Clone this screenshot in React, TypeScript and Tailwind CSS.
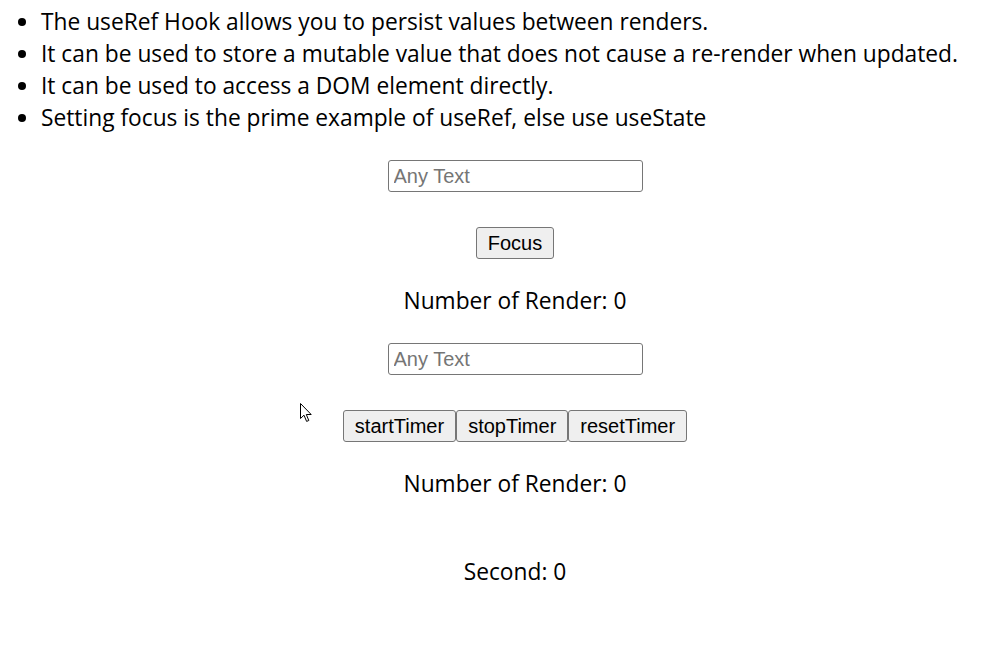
import { useRef, useState } from 'react';

const points = [
  'The useRef Hook allows you to persist values between renders.',
  'It can be used to store a mutable value that does not cause a re-render when updated.',
  'It can be used to access a DOM element directly.',
  'Setting focus is the prime example of useRef, else use useState',
];

const btn =
  "h-[32px] px-[11px] bg-[#efefef] border border-[#767676] rounded-[3px] text-[20px] text-black font-['Liberation_Sans',Arial,sans-serif] leading-none";
const field =
  "h-[32px] w-[255px] px-[5px] border border-[#767676] rounded-[3px] text-[20px] font-['Liberation_Sans',Arial,sans-serif] placeholder:text-[#757575] outline-none";

// mouse pointer that happened to be in the screenshot
const Cursor = () => (
  <svg className="absolute left-[300px] top-[403px]" width="13" height="20" viewBox="0 0 13 20">
    <path d="M0.5 0.5 L0.5 15.5 L4 12.2 L6.6 18.4 L8.8 17.5 L6.3 11.5 L11.2 11.5 Z" fill="#fff" stroke="#000" strokeWidth="1" strokeLinejoin="round" />
  </svg>
);

export default function App() {
  const inputRef = useRef<HTMLInputElement>(null);
  const [seconds] = useState(0);

  return (
    <div className="relative min-h-[646px] bg-white text-black font-['Open_Sans',sans-serif] text-[22.75px] leading-[32px]">
      <ul className="list-disc pl-[41px] pt-[6px]">
        {points.map((p) => (
          <li key={p}>{p}</li>
        ))}
      </ul>

      {/* focus example */}
      <div className="flex flex-col items-center pl-[29px]">
        <input ref={inputRef} className={`${field} mt-[26px]`} placeholder="Any Text" />
        <button className={`${btn} mt-[35px]`} onClick={() => inputRef.current?.focus()}>
          Focus
        </button>
        <p className="mt-[26px]">Number of Render: 0</p>

        {/* timer example */}
        <input className={`${field} mt-[26px]`} placeholder="Any Text" />
        <div className="flex mt-[35px]">
          <button className={btn}>startTimer</button>
          <button className={btn}>stopTimer</button>
          <button className={btn}>resetTimer</button>
        </div>
        <p className="mt-[26px]">Number of Render: 0</p>
        <p className="mt-[56px]">Second: {seconds}</p>
      </div>

      <Cursor />
    </div>
  );
}
